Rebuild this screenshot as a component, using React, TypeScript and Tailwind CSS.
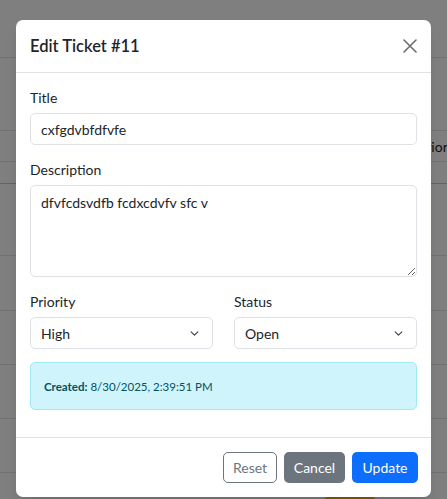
import React from 'react';

const Chevron = () => (
  <svg width="9" height="9" viewBox="0 0 16 16" fill="none" className="shrink-0">
    <path d="M2 5l6 6 6-6" stroke="#343a40" strokeWidth="1.8" strokeLinecap="round" strokeLinejoin="round" />
  </svg>
);

const SelectBox: React.FC<{ value: string }> = ({ value }) => (
  <div className="flex h-[32px] items-center justify-between rounded-[5px] border border-[#dee2e6] bg-white pl-[10px] pr-[13px] text-[14px] text-[#212529]">
    <span>{value}</span>
    <Chevron />
  </div>
);

// the dimmed page behind the modal
const PageBehind = () => (
  <div className="bg-white">
    <div className="h-[58px] border-b border-[#dee2e6]" />
    <div className="h-[73px] border-b border-[#dee2e6]" />
    <div className="flex h-[31px] items-center border-b border-[#dee2e6] pl-[418px]">
      <span className="whitespace-nowrap text-[14px] text-[#212529]">Priority</span>
    </div>
    <div className="h-[22px] border-b border-[#c3c6ca]" />
    <div className="h-[72px] border-b border-[#dee2e6]" />
    <div className="h-[55px] border-b border-[#dee2e6]" />
    <div className="h-[54px] border-b border-[#dee2e6]" />
    <div className="h-[54px] border-b border-[#dee2e6]" />
    <div className="h-[54px] border-b border-[#dee2e6]" />
    <div className="h-[60px] pt-[24px] pl-[324px]">
      <div className="h-[20px] w-[52px] rounded-[4px] bg-[#ffc107]" />
    </div>
  </div>
);

export default function App() {
  return (
    <div
      className="relative h-[499px] w-[447px] overflow-hidden"
      style={{ fontFamily: 'Lato, "Noto Sans", sans-serif' }}
    >
      <PageBehind />
      <div className="absolute inset-0 bg-black/50" />

      <div className="absolute left-[16px] top-[20px] w-[415px] rounded-[7px] bg-white shadow-lg">
        {/* Header */}
        <div className="flex h-[53px] items-center justify-between border-b border-[#dee2e6] pl-[14px] pr-[14px]">
          <h5 className="text-[16.5px] font-semibold text-[#212529]">Edit Ticket #11</h5>
          <button className="flex h-[14px] w-[14px] items-center justify-center">
            <svg width="14" height="14" viewBox="0 0 14 14">
              <path d="M1 1l12 12M13 1L1 13" stroke="#6c6c6c" strokeWidth="1.6" strokeLinecap="round" />
            </svg>
          </button>
        </div>

        {/* Body */}
        <div className="px-[14px] pt-[14px] pb-[27px] text-[14px] text-[#212529]">
          <label className="mb-[5px] block leading-[21px]">Title</label>
          <div className="mb-[14px] flex h-[32px] items-center rounded-[5px] border border-[#dee2e6] px-[10px]">
            cxfgdvbfdfvfe
          </div>

          <label className="mb-[5px] block leading-[21px]">Description</label>
          <textarea
            className="mb-[14px] block h-[92px] w-full rounded-[5px] border border-[#dee2e6] px-[10px] py-[6px] text-[14px] text-[#212529] outline-none"
            defaultValue="dfvfcdsvdfb fcdxcdvfv sfc v"
          />

          <div className="mb-[13px] grid grid-cols-2 gap-[21px]">
            <div>
              <label className="mb-[5px] block leading-[21px]">Priority</label>
              <SelectBox value="High" />
            </div>
            <div>
              <label className="mb-[5px] block leading-[21px]">Status</label>
              <SelectBox value="Open" />
            </div>
          </div>

          <div className="flex h-[48px] items-center rounded-[5px] border border-[#9eeaf9] bg-[#cff4fc] px-[13px] pt-[2px] text-[11.5px] text-[#055160]">
            <span>
              <strong className="font-bold">Created:</strong> 8/30/2025, 2:39:51 PM
            </span>
          </div>
        </div>

        {/* Footer */}
        <div className="flex justify-end gap-[7px] border-t border-[#dee2e6] px-[13px] py-[14px] text-[14px]">
          <button className="h-[31px] w-[54px] rounded-[5px] border border-[#6c757d] text-[#6c757d]">Reset</button>
          <button className="h-[31px] w-[61px] rounded-[5px] bg-[#6c757d] text-white">Cancel</button>
          <button className="h-[31px] w-[66px] rounded-[5px] bg-[#0d6efd] text-white">Update</button>
        </div>
      </div>
    </div>
  );
}
